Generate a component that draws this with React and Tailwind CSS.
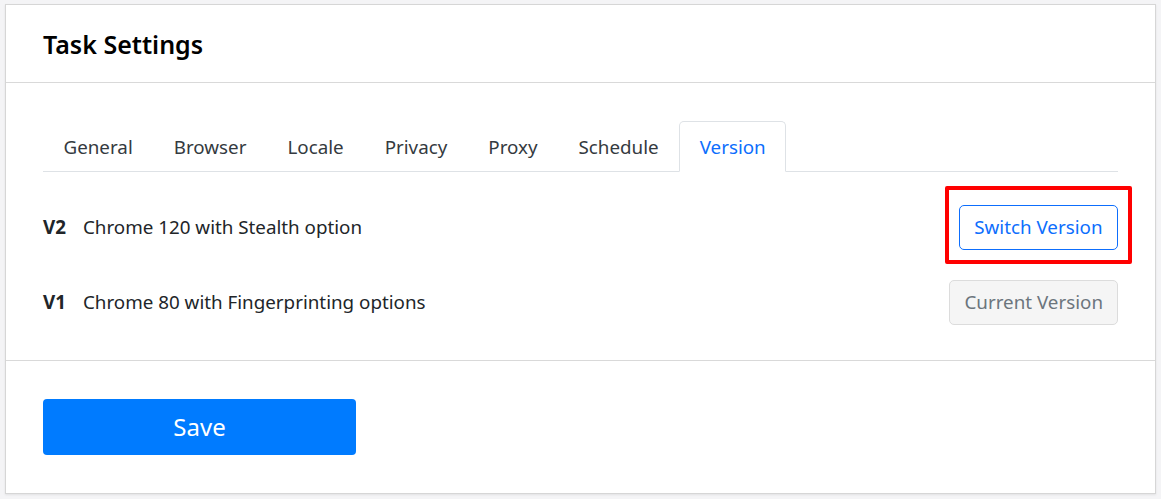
const tabs = ["General", "Browser", "Locale", "Privacy", "Proxy", "Schedule", "Version"];

const versions = [
  { tag: "V2", name: "Chrome 120 with Stealth option", current: false },
  { tag: "V1", name: "Chrome 80 with Fingerprinting options", current: true },
];

export default function App() {
  return (
    <div
      className="min-h-[499px] bg-[#f4f4f6] pt-[4px] pb-[5px] pl-[5px] pr-[5px] text-[#212529]"
      style={{ fontFamily: '"Noto Sans", "Open Sans", sans-serif' }}
    >
      <div className="border border-[#d6d6d6] bg-white shadow-[0_1px_2px_rgba(0,0,0,0.08)]">
        <div className="flex h-[78px] items-center border-b border-[#d9d9d9] px-[37px]">
          <h1 className="pt-[2px] text-[25px] font-semibold text-black">Task Settings</h1>
        </div>

        <div className="px-[37px] pt-[38px] pb-[21px]">
          <div className="flex border-b border-[#dee2e6]">
            {tabs.map((t) => {
              const active = t === "Version";
              return (
                <div
                  key={t}
                  className={
                    active
                      ? "-mb-px flex h-[51px] items-center rounded-t-[5px] border border-[#dee2e6] border-b-white bg-white px-[19.5px] pt-[2px] text-[18.8px] text-[#0d6efd]"
                      : "flex h-[50px] items-center border border-transparent px-[19.5px] pt-[2px] text-[18.8px] text-[#343a40]"
                  }
                >
                  {t}
                </div>
              );
            })}
          </div>

          <div className="mt-[17px]">
            {versions.map((v) => (
              <div key={v.tag} className="flex h-[75px] items-center justify-between pt-[2px]">
                <div className="flex items-center text-[18.8px]">
                  <span className="w-[40px] font-bold">{v.tag}</span>
                  <span>{v.name}</span>
                </div>
                {v.current ? (
                  <button className="h-[45px] rounded-[5px] border border-[#dcdcdc] bg-[#f5f5f5] px-[14px] text-[18.8px] text-[#6c757d]">
                    Current Version
                  </button>
                ) : (
                  <div className="relative">
                    <button className="h-[45px] rounded-[5px] border border-[#0d6efd] bg-white px-[14.5px] text-[18.8px] text-[#0d6efd]">
                      Switch Version
                    </button>
                    <div className="pointer-events-none absolute -top-[19px] -bottom-[14px] -left-[14px] -right-[14px] rounded-[2px] border-[4px] border-[#ff0000]" />
                  </div>
                )}
              </div>
            ))}
          </div>
        </div>

        <div className="border-t border-[#d9d9d9] px-[37px] pt-[38px] pb-[38px]">
          <button className="h-[56px] w-[313px] rounded-[4px] bg-[#007bff] text-[24px] text-white">
            Save
          </button>
        </div>
      </div>
    </div>
  );
}
